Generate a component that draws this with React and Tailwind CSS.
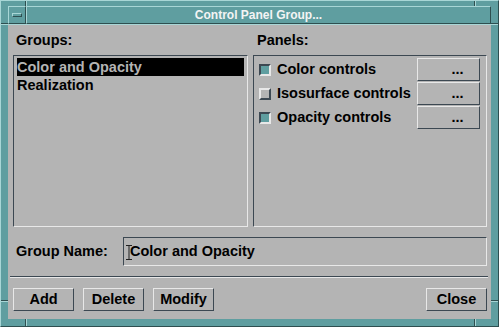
import React from "react";

const DARK = "border-[#3c4852]";

function Btn({ label, className = "" }) {
  return (
    <div
      className={`h-[23px] flex items-center justify-center bg-[#b4b4b4] border border-t-[#e8e8e8] border-l-[#e8e8e8] border-r-[#3c4852] border-b-[#3c4852] text-black ${className}`}
    >
      {label}
    </div>
  );
}

function Check({ checked }) {
  return checked ? (
    <div className="w-[12px] h-[12px] border-2 border-t-[#3c4852] border-l-[#3c4852] border-r-[#e8e8e8] border-b-[#e8e8e8] bg-[#5f9ea0]" />
  ) : (
    <div className="w-[12px] h-[12px] border-2 border-t-[#e8e8e8] border-l-[#e8e8e8] border-r-[#3c4852] border-b-[#3c4852] bg-[#b4b4b4]" />
  );
}

function PanelRow({ label, checked }) {
  return (
    <div className="h-[23px] flex items-center">
      <Check checked={checked} />
      <span className="ml-[6px] flex-1 leading-[17px]">{label}</span>
      <div className="w-[63px] h-[23px] flex items-center justify-center pl-[18px] bg-[#b4b4b4] border border-t-[#e8e8e8] border-l-[#e8e8e8] border-r-[#3c4852] border-b-[#3c4852]">
        ...
      </div>
    </div>
  );
}

export default function App() {
  return (
    <div
      className="relative w-[499px] h-[327px] bg-[#5f9ea0] flex flex-col border border-t-[#a8d6d6] border-l-[#a8d6d6] border-r-[#2e4f50] border-b-[#2e4f50] pt-[5px] pl-[7px] pr-[7px] pb-[7px] text-[14.5px] font-bold text-black"
      style={{ fontFamily: '"Liberation Sans", Arial, sans-serif' }}
    >
      {/* corner separators */}
      <div className="absolute left-[24px] top-0 w-[2px] h-[5px] border-l border-l-[#2e4f50] border-r border-r-[#a8d6d6]" />
      <div className="absolute left-[473px] top-0 w-[2px] h-[5px] border-l border-l-[#2e4f50] border-r border-r-[#a8d6d6]" />
      <div className="absolute left-[24px] bottom-0 w-[2px] h-[7px] border-l border-l-[#2e4f50] border-r border-r-[#a8d6d6]" />
      <div className="absolute left-[473px] bottom-0 w-[2px] h-[7px] border-l border-l-[#2e4f50] border-r border-r-[#a8d6d6]" />
      <div className="absolute left-0 top-[22px] w-[7px] h-[2px] border-t border-t-[#2e4f50] border-b border-b-[#a8d6d6]" />
      <div className="absolute right-0 top-[22px] w-[7px] h-[2px] border-t border-t-[#2e4f50] border-b border-b-[#a8d6d6]" />
      <div className="absolute left-0 top-[299px] w-[7px] h-[2px] border-t border-t-[#2e4f50] border-b border-b-[#a8d6d6]" />
      <div className="absolute right-0 top-[299px] w-[7px] h-[2px] border-t border-t-[#2e4f50] border-b border-b-[#a8d6d6]" />

      {/* title row */}
      <div className="flex h-[18px]">
        <div className="w-[18px] h-[18px] flex items-center justify-center bg-[#5f9ea0] border border-t-[#a8d6d6] border-l-[#a8d6d6] border-r-[#2e4f50] border-b-[#2e4f50]">
          <div className="w-[10px] h-[4px] border border-t-[#a8d6d6] border-l-[#a8d6d6] border-r-[#2e4f50] border-b-[#2e4f50]" />
        </div>
        <div className="flex-1 flex items-center justify-center bg-[#5f9ea0] border border-t-[#a8d6d6] border-l-[#a8d6d6] border-r-[#2e4f50] border-b-[#2e4f50] text-[12px] text-[#f4f4f4] leading-[16px]">
          Control Panel Group...
        </div>
      </div>

      {/* body */}
      <div className="flex-1 bg-[#b4b4b4] flex flex-col pt-[7px] pl-[5px] pr-[4px] border-t border-t-[#a8d6d6]">
        <div className="flex gap-[5px]">
          <div className="w-[235px] flex flex-col">
            <div className="h-[17px] leading-[17px] pl-[3px]">Groups:</div>
            <div className="mt-[6px] h-[172px] border border-t-[#3c4852] border-l-[#3c4852] border-r-[#e8e8e8] border-b-[#e8e8e8] pt-[2px] px-[3px]">
              <div className="h-[18px] leading-[18px] bg-black text-[#b4b4b4]">Color and Opacity</div>
              <div className="h-[18px] leading-[18px]">Realization</div>
            </div>
          </div>
          <div className="flex-1 flex flex-col">
            <div className="h-[17px] leading-[17px] pl-[4px]">Panels:</div>
            <div className="mt-[6px] h-[172px] border border-t-[#3c4852] border-l-[#3c4852] border-r-[#e8e8e8] border-b-[#e8e8e8] pt-[2px] pl-[5px] pr-[6px] flex flex-col gap-[1px]">
              <PanelRow label="Color controls" checked />
              <PanelRow label="Isosurface controls" checked={false} />
              <PanelRow label="Opacity controls" checked />
            </div>
          </div>
        </div>

        {/* group name */}
        <div className="mt-[10px] h-[29px] flex items-center">
          <div className="w-[110px] pl-[3px] leading-[17px]">Group Name:</div>
          <div className="relative flex-1 h-[29px] flex items-center border border-t-[#3c4852] border-l-[#3c4852] border-r-[#e8e8e8] border-b-[#e8e8e8] pl-[6px]">
            <span className="leading-[17px]">Color and Opacity</span>
            <svg className="absolute left-[2px] top-[7px]" width="6" height="15" viewBox="0 0 6 15">
              <path d="M0 0.5H6M0 14.5H6M3 0V15" stroke="#202020" strokeWidth="1" fill="none" />
            </svg>
          </div>
        </div>

        {/* separator */}
        <div className="mt-[10px] -ml-[3px] -mr-[1px] h-[2px] border-t border-t-[#3c4852] border-b border-b-[#e8e8e8]" />

        {/* buttons */}
        <div className="mt-[10px] flex items-center">
          <Btn label="Add" className="w-[61px]" />
          <Btn label="Delete" className="w-[61px] ml-[9px]" />
          <Btn label="Modify" className="w-[61px] ml-[9px]" />
          <div className="flex-1" />
          <Btn label="Close" className="w-[61px]" />
        </div>
      </div>
    </div>
  );
}
